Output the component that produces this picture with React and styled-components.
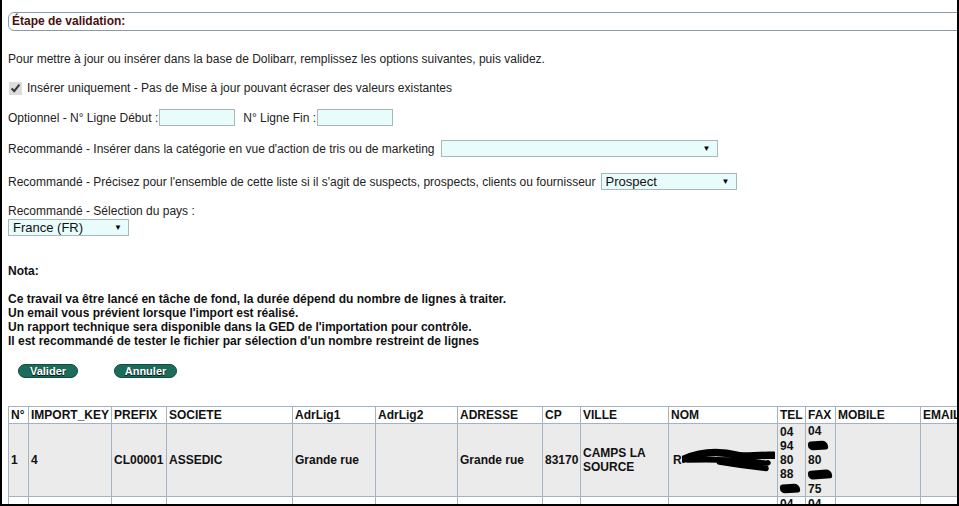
import React from "react";
import styled, { createGlobalStyle } from "styled-components";

const GlobalStyle = createGlobalStyle`
  html, body {
    margin: 0;
    padding: 0;
    background: #fff;
  }
  body {
    font-family: "Liberation Sans", Arial, sans-serif;
    font-size: 12px;
    color: #222;
  }
`;

const Frame = styled.div`
  box-sizing: border-box;
  width: 959px;
  height: 506px;
  border-left: 2px solid #000;
  border-right: 2px solid #000;
  border-bottom: 2px solid #000;
  padding: 12px 0 0 6px;
  overflow: hidden;
`;

const TitleBox = styled.div`
  box-sizing: border-box;
  width: 980px;
  height: 19px;
  border: 1px solid #8c9aa6;
  border-radius: 6px;
  padding-left: 3px;
  font-weight: bold;
  line-height: 17px;
  color: #4a0f0f;
`;

const Line = styled.div`
  margin-top: ${(p) => p.$mt || 0}px;
  line-height: 14px;
  white-space: nowrap;
  font-weight: ${(p) => (p.$bold ? "bold" : "normal")};
  color: ${(p) => (p.$bold ? "#111" : "#222")};
`;

const Row = styled.div`
  display: flex;
  align-items: center;
  margin-top: ${(p) => p.$mt || 0}px;
  height: ${(p) => p.$h || 17}px;
  white-space: nowrap;
`;

const Check = styled.input`
  width: 13px;
  height: 13px;
  margin: 0 5px 0 1px;
  accent-color: #dcdcdc;
`;

const TextInput = styled.input`
  box-sizing: border-box;
  width: ${(p) => p.$w}px;
  height: 17px;
  margin: 0 ${(p) => p.$mr || 0}px 0 1px;
  padding: 0 2px;
  border: 1px solid #a7b8bb;
  background: #e8fcfc;
  font: inherit;
`;

const SelectWrap = styled.div`
  position: relative;
  box-sizing: border-box;
  width: ${(p) => p.$w}px;
  height: 17px;
  margin-left: ${(p) => p.$ml || 0}px;
  border: 1px solid #a7b8bb;
  background: #e8fcfc;
`;

const Select = styled.select`
  appearance: none;
  box-sizing: border-box;
  width: 100%;
  height: 15px;
  border: 0;
  background: transparent;
  padding: 0 0 0 4px;
  font-family: "Liberation Sans", Arial, sans-serif;
  font-size: 13px;
  line-height: 15px;
  color: #111;
  outline: none;
`;

const Arrow = styled.span`
  position: absolute;
  right: 6px;
  top: 0;
  font-size: 8px;
  line-height: 15px;
  color: #000;
  pointer-events: none;
`;

const Buttons = styled.div`
  display: flex;
  gap: 36px;
  margin: 16px 0 0 10px;
`;

const Button = styled.button`
  box-sizing: border-box;
  width: ${(p) => p.$w}px;
  height: 14px;
  padding: 0;
  border: 1px solid #0f4d40;
  border-radius: 8px;
  background: #1c6b5b;
  color: #fff;
  font-family: "Liberation Sans", Arial, sans-serif;
  font-weight: bold;
  font-size: 11px;
  line-height: 12px;
  text-shadow: 0 1px 1px #000;
`;

const Table = styled.table`
  margin-top: 28px;
  border-collapse: collapse;
  table-layout: fixed;
  width: 992px;
  font-weight: bold;
  color: #111;
`;

const Th = styled.th`
  box-sizing: border-box;
  width: ${(p) => p.$w}px;
  height: 17px;
  padding: 0 2px;
  border: 1px solid #a3b3c3;
  text-align: left;
  line-height: 14px;
  white-space: nowrap;
  overflow: hidden;
`;

const Tr = styled.tr`
  background: ${(p) => (p.$shade ? "#ebebeb" : "#fff")};
`;

const Td = styled.td`
  height: ${(p) => p.$h || 72}px;
  padding: 0 2px;
  border: 1px solid #a3b3c3;
  vertical-align: ${(p) => p.$va || "middle"};
  line-height: 14px;
  overflow: hidden;
`;

const Stack = styled.div`
  display: flex;
  flex-direction: column;
`;

const Blot = styled.span`
  display: inline-block;
  width: ${(p) => p.$w || 20}px;
  height: 9px;
  margin-top: 3px;
  background: #000;
  border-radius: 3px 6px 2px 5px;
  transform: rotate(-4deg);
`;

const Nom = styled.div`
  display: flex;
  align-items: center;
  margin-left: 2px;
`;

const columns = [
  ["N°", 20],
  ["IMPORT_KEY", 83],
  ["PREFIX", 55],
  ["SOCIETE", 126],
  ["AdrLig1", 83],
  ["AdrLig2", 82],
  ["ADRESSE", 85],
  ["CP", 38],
  ["VILLE", 88],
  ["NOM", 109],
  ["TEL", 28],
  ["FAX", 30],
  ["MOBILE", 85],
  ["EMAIL", 80],
];

const Scribble = () => (
  <svg width="100" height="26" viewBox="0 0 100 26">
    <path
      d="M2 12 C20 4 40 3 60 8 C75 10 88 7 98 8"
      stroke="#000"
      strokeWidth="8"
      fill="none"
      strokeLinecap="round"
    />
    <path
      d="M6 13 C30 12 55 13 78 15 C85 16 90 17 92 16"
      stroke="#000"
      strokeWidth="6"
      fill="none"
      strokeLinecap="round"
    />
    <path
      d="M40 15 C58 18 72 20 90 22"
      stroke="#000"
      strokeWidth="6"
      fill="none"
      strokeLinecap="round"
    />
  </svg>
);

const App = () => (
  <>
    <GlobalStyle />
    <Frame>
      <TitleBox>Étape de validation:</TitleBox>

      <Line $mt={21}>
        Pour mettre à jour ou insérer dans la base de Dolibarr, remplissez les
        options suivantes, puis validez.
      </Line>

      <Row $mt={15} $h={14}>
        <Check type="checkbox" defaultChecked />
        Insérer uniquement - Pas de Mise à jour pouvant écraser des valeurs
        existantes
      </Row>

      <Row $mt={14}>
        Optionnel - N° Ligne Début :
        <TextInput $w={76} $mr={8} />
        N° Ligne Fin :
        <TextInput $w={76} />
      </Row>

      <Row $mt={14}>
        Recommandé - Insérer dans la catégorie en vue d'action de tris ou de
        marketing
        <SelectWrap $w={277} $ml={6}>
          <Select defaultValue="">
            <option value=""></option>
          </Select>
          <Arrow>▼</Arrow>
        </SelectWrap>
      </Row>

      <Row $mt={16}>
        Recommandé - Précisez pour l'ensemble de cette liste si il s'agit de
        suspects, prospects, clients ou fournisseur
        <SelectWrap $w={136} $ml={5}>
          <Select defaultValue="p">
            <option value="p">Prospect</option>
          </Select>
          <Arrow>▼</Arrow>
        </SelectWrap>
      </Row>

      <Line $mt={14}>Recommandé - Sélection du pays :</Line>
      <Row $mt={1}>
        <SelectWrap $w={121}>
          <Select defaultValue="fr">
            <option value="fr">France (FR)</option>
          </Select>
          <Arrow>▼</Arrow>
        </SelectWrap>
      </Row>

      <Line $mt={28} $bold>
        Nota:
      </Line>
      <Line $mt={14} $bold>
        Ce travail va être lancé en tâche de fond, la durée dépend du nombre de
        lignes à traiter.
        <br />
        Un email vous prévient lorsque l'import est réalisé.
        <br />
        Un rapport technique sera disponible dans la GED de l'importation pour
        contrôle.
        <br />
        Il est recommandé de tester le fichier par sélection d'un nombre
        restreint de lignes
      </Line>

      <Buttons>
        <Button $w={60}>Valider</Button>
        <Button $w={63}>Annuler</Button>
      </Buttons>

      <Table>
        <colgroup>
          {columns.map(([label, w]) => (
            <col key={label} style={{ width: w }} />
          ))}
        </colgroup>
        <thead>
          <tr>
            {columns.map(([label, w]) => (
              <Th key={label} $w={w}>
                {label}
              </Th>
            ))}
          </tr>
        </thead>
        <tbody>
          <Tr $shade>
            <Td>1</Td>
            <Td>4</Td>
            <Td>CL00001</Td>
            <Td>ASSEDIC</Td>
            <Td>Grande rue</Td>
            <Td></Td>
            <Td>Grande rue</Td>
            <Td>83170</Td>
            <Td>
              CAMPS LA
              <br />
              SOURCE
            </Td>
            <Td>
              <Nom>
                R
                <Scribble />
              </Nom>
            </Td>
            <Td>
              <Stack>
                <span>04</span>
                <span>94</span>
                <span>80</span>
                <span>88</span>
                <span>
                  <Blot $w={20} />
                </span>
              </Stack>
            </Td>
            <Td>
              <Stack>
                <span>04</span>
                <span>
                  <Blot $w={20} />
                </span>
                <span>80</span>
                <span>
                  <Blot $w={24} />
                </span>
                <span>75</span>
              </Stack>
            </Td>
            <Td></Td>
            <Td></Td>
          </Tr>
          <Tr>
            {columns.map(([label]) => (
              <Td key={label} $h={40} $va="top">
                {label === "TEL" || label === "FAX" ? "04" : ""}
              </Td>
            ))}
          </Tr>
        </tbody>
      </Table>
    </Frame>
  </>
);

export default App;
